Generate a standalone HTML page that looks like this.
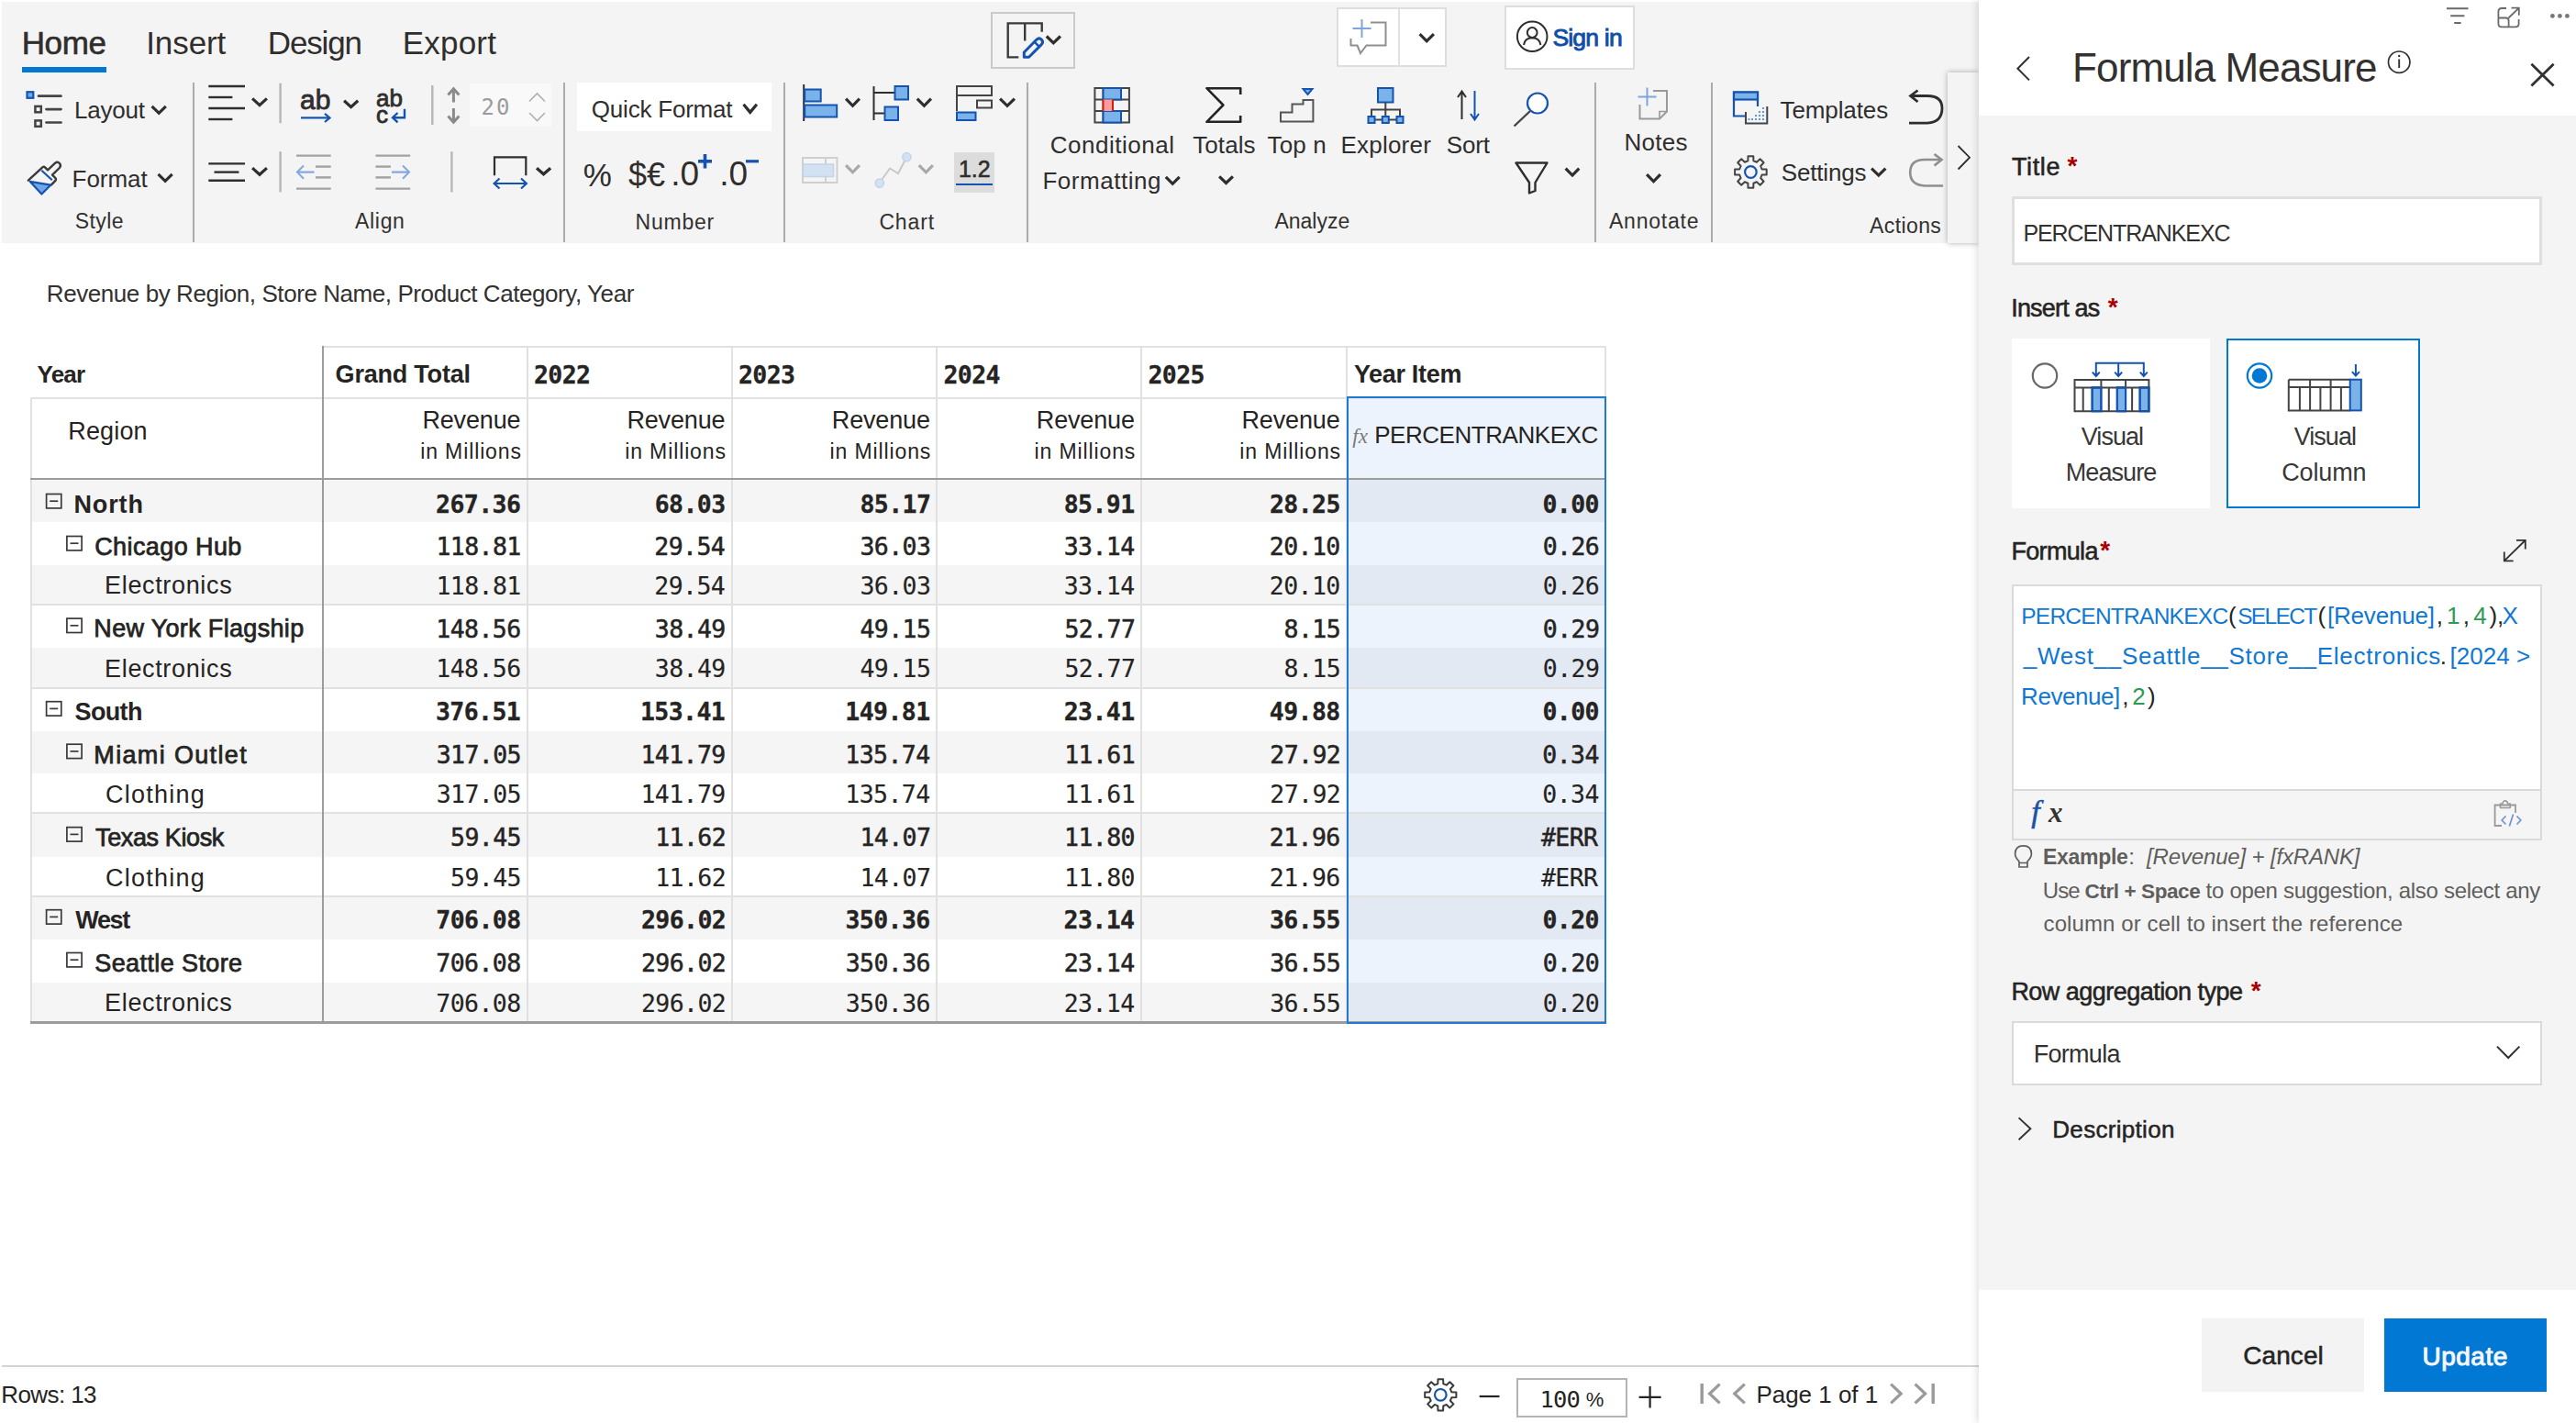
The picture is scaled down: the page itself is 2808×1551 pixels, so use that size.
<!DOCTYPE html>
<html lang="en"><head><meta charset="utf-8"><title>Formula Measure</title>
<style>
html,body{margin:0;padding:0;background:#fff;}
body{width:2808px;height:1551px;position:relative;overflow:hidden;font-family:"Liberation Sans",sans-serif;color:#252423;}
.sec{position:absolute;left:0;top:0;}
.t{position:absolute;white-space:pre;display:block;}
.r{position:absolute;box-sizing:border-box;display:block;}
svg{overflow:visible;}
</style></head>
<body>
<!-- ribbon -->
<div class="sec" id="ribbon">
<div class="r" style="left:2px;top:2px;width:2155px;height:262.5px;background:#f4f4f4;"></div>
<span class="t" style="left:23.7px;top:26.5px;font-size:35px;line-height:40px;color:#2f2e2d;font-family:'Liberation Sans',sans-serif;letter-spacing:-0.37px;-webkit-text-stroke:0.6px #2f2e2d;">Home</span>
<span class="t" style="left:159.2px;top:26.5px;font-size:35px;line-height:40px;color:#2f2e2d;font-family:'Liberation Sans',sans-serif;letter-spacing:-0.08px;">Insert</span>
<span class="t" style="left:291.8px;top:26.5px;font-size:35px;line-height:40px;color:#2f2e2d;font-family:'Liberation Sans',sans-serif;letter-spacing:-1.16px;">Design</span>
<span class="t" style="left:438.7px;top:26.5px;font-size:35px;line-height:40px;color:#2f2e2d;font-family:'Liberation Sans',sans-serif;letter-spacing:0.21px;">Export</span>
<div class="r" style="left:24px;top:73px;width:92px;height:6.4px;background:#0078d4;"></div>
<div class="r" style="left:209.7px;top:90px;width:2px;height:173.5px;background:#ababab;"></div>
<div class="r" style="left:614px;top:90px;width:2px;height:173.5px;background:#ababab;"></div>
<div class="r" style="left:854.4px;top:90px;width:2px;height:173.5px;background:#ababab;"></div>
<div class="r" style="left:1119.4px;top:90px;width:2px;height:173.5px;background:#ababab;"></div>
<div class="r" style="left:1737.8px;top:90px;width:2px;height:173.5px;background:#ababab;"></div>
<div class="r" style="left:1865px;top:90px;width:2px;height:173.5px;background:#ababab;"></div>
<span class="t" style="left:81.7px;top:228.4px;font-size:23px;line-height:26px;color:#323130;font-family:'Liberation Sans',sans-serif;letter-spacing:0.46px;">Style</span>
<span class="t" style="left:387.0px;top:228.4px;font-size:23px;line-height:26px;color:#323130;font-family:'Liberation Sans',sans-serif;letter-spacing:0.69px;">Align</span>
<span class="t" style="left:692.6px;top:228.6px;font-size:23px;line-height:26px;color:#323130;font-family:'Liberation Sans',sans-serif;letter-spacing:0.77px;">Number</span>
<span class="t" style="left:958.4px;top:228.6px;font-size:23px;line-height:26px;color:#323130;font-family:'Liberation Sans',sans-serif;letter-spacing:0.87px;">Chart</span>
<span class="t" style="left:1389.4px;top:228.4px;font-size:23px;line-height:26px;color:#323130;font-family:'Liberation Sans',sans-serif;letter-spacing:0.02px;">Analyze</span>
<span class="t" style="left:1754.0px;top:228.4px;font-size:23px;line-height:26px;color:#323130;font-family:'Liberation Sans',sans-serif;letter-spacing:0.77px;">Annotate</span>
<span class="t" style="left:2038.0px;top:233.4px;font-size:23px;line-height:26px;color:#323130;font-family:'Liberation Sans',sans-serif;letter-spacing:0.40px;">Actions</span>
<span class="t" style="left:80.9px;top:105.1px;font-size:26px;line-height:30px;color:#2f2e2d;font-family:'Liberation Sans',sans-serif;letter-spacing:-0.18px;">Layout</span>
<span class="t" style="left:78.6px;top:180.2px;font-size:26px;line-height:30px;color:#2f2e2d;font-family:'Liberation Sans',sans-serif;letter-spacing:-0.04px;">Format</span>
<div class="r" style="left:629.3px;top:90.3px;width:211.7px;height:53px;background:#ffffff;"></div>
<span class="t" style="left:644.8px;top:103.6px;font-size:26px;line-height:30px;color:#2f2e2d;font-family:'Liberation Sans',sans-serif;letter-spacing:-0.21px;">Quick Format</span>
<span class="t" style="left:635.8px;top:170.5px;font-size:35px;line-height:40px;color:#2f2e2d;font-family:'Liberation Sans',sans-serif;">%</span>
<span class="t" style="left:685.1px;top:169.5px;font-size:36px;line-height:41px;color:#2f2e2d;font-family:'Liberation Sans',sans-serif;">$€</span>
<span class="t" style="left:731.2px;top:169.0px;font-size:37px;line-height:42px;color:#2f2e2d;font-family:'Liberation Sans',sans-serif;">.0</span>
<span class="t" style="left:784.2px;top:169.0px;font-size:37px;line-height:42px;color:#2f2e2d;font-family:'Liberation Sans',sans-serif;">.0</span>
<div class="r" style="left:1039.8px;top:165.6px;width:44.2px;height:44px;background:#dcdcdc;"></div>
<span class="t" style="left:1044.9px;top:170.2px;font-size:25px;line-height:28px;color:#2f2e2d;font-family:'Liberation Sans',sans-serif;-webkit-text-stroke:0.6px #2f2e2d;">1.2</span>
<div class="r" style="left:1042px;top:199.8px;width:40px;height:2.6px;background:#1553b0;"></div>
<div class="r" style="left:511.8px;top:90.7px;width:89px;height:47.2px;background:#f9f9f9;"></div>
<span class="t" style="left:524.5px;top:103.2px;font-size:24px;line-height:28px;color:#9c9c9c;font-family:'DejaVu Sans Mono','Liberation Mono',monospace;letter-spacing:2.07px;">20</span>
<span class="t" style="left:327.1px;top:92.4px;font-size:30px;line-height:33px;color:#2f2e2d;font-family:'Liberation Sans',sans-serif;-webkit-text-stroke:0.8px #2f2e2d;">ab</span>
<span class="t" style="left:410.0px;top:91.8px;font-size:26px;line-height:30px;color:#2f2e2d;font-family:'Liberation Sans',sans-serif;-webkit-text-stroke:0.8px #2f2e2d;">ab</span>
<span class="t" style="left:410.0px;top:110.0px;font-size:26px;line-height:30px;color:#2f2e2d;font-family:'Liberation Sans',sans-serif;-webkit-text-stroke:0.8px #2f2e2d;">c</span>
<span class="t" style="left:1144.7px;top:143.0px;font-size:26px;line-height:30px;color:#2f2e2d;font-family:'Liberation Sans',sans-serif;letter-spacing:0.52px;">Conditional</span>
<span class="t" style="left:1136.4px;top:182.0px;font-size:26px;line-height:30px;color:#2f2e2d;font-family:'Liberation Sans',sans-serif;letter-spacing:0.54px;">Formatting</span>
<span class="t" style="left:1300.2px;top:143.0px;font-size:26px;line-height:30px;color:#2f2e2d;font-family:'Liberation Sans',sans-serif;letter-spacing:0.10px;">Totals</span>
<span class="t" style="left:1381.5px;top:143.0px;font-size:26px;line-height:30px;color:#2f2e2d;font-family:'Liberation Sans',sans-serif;letter-spacing:0.13px;">Top n</span>
<span class="t" style="left:1461.4px;top:143.0px;font-size:26px;line-height:30px;color:#2f2e2d;font-family:'Liberation Sans',sans-serif;letter-spacing:0.23px;">Explorer</span>
<span class="t" style="left:1576.8px;top:143.0px;font-size:26px;line-height:30px;color:#2f2e2d;font-family:'Liberation Sans',sans-serif;letter-spacing:-0.15px;">Sort</span>
<span class="t" style="left:1770.5px;top:139.8px;font-size:26px;line-height:30px;color:#2f2e2d;font-family:'Liberation Sans',sans-serif;letter-spacing:0.27px;">Notes</span>
<span class="t" style="left:1940.5px;top:105.0px;font-size:26px;line-height:30px;color:#2f2e2d;font-family:'Liberation Sans',sans-serif;letter-spacing:-0.10px;">Templates</span>
<span class="t" style="left:1941.8px;top:173.3px;font-size:26px;line-height:30px;color:#2f2e2d;font-family:'Liberation Sans',sans-serif;letter-spacing:-0.17px;">Settings</span>
<div class="r" style="left:1080px;top:13.4px;width:92px;height:61.3px;border:2px solid #cacaca;"></div>
<div class="r" style="left:1456.8px;top:8.1px;width:120.4px;height:65.4px;background:#fff;border:2.4px solid #dedede;"></div>
<div class="r" style="left:1524.3px;top:9px;width:2px;height:63.5px;background:#e1e1e1;"></div>
<div class="r" style="left:1639.8px;top:5.8px;width:141.9px;height:70px;background:#fff;border:2.4px solid #dedede;"></div>
<span class="t" style="left:1692.4px;top:26.3px;font-size:26.5px;line-height:30px;color:#0f4fa8;font-family:'Liberation Sans',sans-serif;letter-spacing:-0.79px;-webkit-text-stroke:0.9px #0f4fa8;">Sign in</span>
<div class="r" style="left:2123px;top:79px;width:34px;height:185.5px;background:#f4f4f4;box-shadow:0 0 6px rgba(0,0,0,0.32);"></div>
<svg class="r" style="left:0px;top:0px;" width="2808" height="1551" viewBox="0 0 2808 1551" fill="none"><rect x="29.5" y="100.2" width="6.8" height="6.6" fill="#6fa8e6" stroke="#1553b0" stroke-width="2.2"/><path d="M42 104.7 L66.5 104.7" stroke="#444" stroke-width="2.7" stroke-linecap="round"/><rect x="38.4" y="115.9" width="6.4" height="6.4" stroke="#444" stroke-width="2.5"/><path d="M50.5 119.1 L66.5 119.1" stroke="#444" stroke-width="2.7" stroke-linecap="round"/><rect x="38.4" y="131.4" width="6.4" height="6.4" stroke="#444" stroke-width="2.5"/><path d="M50.5 133.5 L66.5 133.5" stroke="#444" stroke-width="2.7" stroke-linecap="round"/><path d="M165.6 115.9 L173.2 123.3 L180.8 115.9" stroke="#2f2e2d" stroke-width="3.2"/><path d="M30.8 196.6 L46.6 182.2 Q47.8 181.1 49 182.3 L52 185.3 L60.2 177.6 Q62.6 175.6 65 178 Q67 180.5 64.8 183 L57 190.6 L60.4 194 Q61.6 195.6 60.2 197.2 L56 201.4" stroke="#3a3a3a" stroke-width="2.4" stroke-linejoin="round" stroke-linecap="round"/><path d="M32.6 197.8 L55.2 201.7 L45.4 211.6 Z" fill="#6fa8e6" stroke="#1553b0" stroke-width="2.2" stroke-linejoin="round"/><path d="M45.3 185.7 L56.8 196.3" stroke="#1553b0" stroke-width="2.2" /><path d="M172.5 189.9 L180.1 197.3 L187.7 189.9" stroke="#2f2e2d" stroke-width="3.2"/><path d="M227.3 94 L267 94" stroke="#2f2e2d" stroke-width="2.4" /><path d="M227.3 106 L253.4 106" stroke="#2f2e2d" stroke-width="2.4" /><path d="M227.3 118 L267 118" stroke="#2f2e2d" stroke-width="2.4" /><path d="M227.3 130 L253.4 130" stroke="#2f2e2d" stroke-width="2.4" /><path d="M275.1 107.4 L283.0 114.6 L290.9 107.4" stroke="#2f2e2d" stroke-width="3.2"/><path d="M305.6 90.7 L305.6 134.2" stroke="#b6b6b6" stroke-width="2.4" /><path d="M328 128.4 L359 128.4" stroke="#1553b0" stroke-width="2.2" /><path d="M354 123.8 L359.5 128.4 L354 133" stroke="#1553b0" stroke-width="2.2"/><path d="M375.1 109.7 L382.6 116.6 L390.2 109.7" stroke="#2f2e2d" stroke-width="3.2"/><path d="M441 118.8 L441 128.2 L428.5 128.2" stroke="#1553b0" stroke-width="2.4"/><path d="M433.5 123 L428 128.2 L433.5 133.4" stroke="#1553b0" stroke-width="2.4"/><path d="M471.3 93 L471.3 136" stroke="#b6b6b6" stroke-width="2.4" /><path d="M494.4 97.5 L494.4 111.5" stroke="#8a8a8a" stroke-width="3" /><path d="M494.4 118 L494.4 132.5" stroke="#8a8a8a" stroke-width="3" /><path d="M488.4 103.4 L494.4 96.8 L500.4 103.4" stroke="#8a8a8a" stroke-width="3"/><path d="M488.4 126.6 L494.4 133.2 L500.4 126.6" stroke="#8a8a8a" stroke-width="3"/><path d="M577 110.5 L585.5 102 L594 110.5" stroke="#b0b0b0" stroke-width="1.6"/><path d="M577 123 L585.5 131.5 L594 123" stroke="#b0b0b0" stroke-width="1.6"/><path d="M227.3 178.4 L267 178.4" stroke="#2f2e2d" stroke-width="2.4" /><path d="M233.5 187.6 L260.4 187.6" stroke="#2f2e2d" stroke-width="2.4" /><path d="M227.3 196.8 L267 196.8" stroke="#2f2e2d" stroke-width="2.4" /><path d="M275.1 183.1 L283.0 190.3 L290.9 183.1" stroke="#2f2e2d" stroke-width="3.2"/><path d="M305.6 165.2 L305.6 209.4" stroke="#b6b6b6" stroke-width="2.4" /><path d="M323 169.6 L360.7 169.6" stroke="#a2a2a2" stroke-width="2.4" /><path d="M323 205.6 L360.7 205.6" stroke="#a2a2a2" stroke-width="2.4" /><path d="M344 181.6 L360.7 181.6" stroke="#a2a2a2" stroke-width="2.4" /><path d="M344 193.4 L360.7 193.4" stroke="#a2a2a2" stroke-width="2.4" /><path d="M324.5 187.6 L342.5 187.6" stroke="#82a6de" stroke-width="2.2" /><path d="M331 180.5 L324 187.6 L331 194.7" stroke="#82a6de" stroke-width="2"/><path d="M409.4 169.6 L447.2 169.6" stroke="#a2a2a2" stroke-width="2.4" /><path d="M409.4 205.6 L447.2 205.6" stroke="#a2a2a2" stroke-width="2.4" /><path d="M409.4 181.6 L426 181.6" stroke="#a2a2a2" stroke-width="2.4" /><path d="M409.4 193.4 L426 193.4" stroke="#a2a2a2" stroke-width="2.4" /><path d="M427 187.6 L445.5 187.6" stroke="#82a6de" stroke-width="2.2" /><path d="M439 180.5 L446 187.6 L439 194.7" stroke="#82a6de" stroke-width="2"/><path d="M492.4 165.2 L492.4 209.4" stroke="#b6b6b6" stroke-width="2.4" /><path d="M539 191.3 L539 171.3 L573.3 171.3 L573.3 191.3" stroke="#2f2e2d" stroke-width="2.2"/><path d="M539 200 L573.5 200" stroke="#1553b0" stroke-width="2.2" /><path d="M544.5 194.5 L538.6 200 L544.5 205.5" stroke="#1553b0" stroke-width="2.2"/><path d="M568 194.5 L573.9 200 L568 205.5" stroke="#1553b0" stroke-width="2.2"/><path d="M585.0 183.2 L592.5 189.8 L600.1 183.2" stroke="#2f2e2d" stroke-width="3.2"/><path d="M810.5 113.8 L817.7 122.4 L824.9 113.8" stroke="#2f2e2d" stroke-width="3.2"/><path d="M761 175.8 L776 175.8" stroke="#1553b0" stroke-width="3.6" /><path d="M768.5 168 L768.5 183.5" stroke="#1553b0" stroke-width="3.6" /><path d="M813 175.8 L827 175.8" stroke="#1553b0" stroke-width="3.2" /></svg>
<svg class="r" style="left:0px;top:0px;" width="2808" height="1551" viewBox="0 0 2808 1551" fill="none"><path d="M876.2 92 L876.2 132" stroke="#2f2e2d" stroke-width="2" /><rect x="877.2" y="97.5" width="17.5" height="13" fill="#7ab3ea" stroke="#1553b0" stroke-width="2"/><rect x="877.2" y="114.5" width="35" height="13" fill="#7ab3ea" stroke="#1553b0" stroke-width="2"/><path d="M922.1 107.6 L929.5 115.3 L936.9 107.6" stroke="#2f2e2d" stroke-width="3.2"/><path d="M952.5 94 L952.5 131 M952.5 101 L975 101 M952.5 123.5 L964 123.5" stroke="#2f2e2d" stroke-width="2"/><rect x="975.5" y="94" width="14.5" height="14.5" fill="#7ab3ea" stroke="#1553b0" stroke-width="2"/><rect x="964.5" y="116.5" width="14.5" height="14.5" fill="#7ab3ea" stroke="#1553b0" stroke-width="2"/><path d="M999.8 107.6 L1007.4 115.3 L1014.9 107.6" stroke="#2f2e2d" stroke-width="3.2"/><path d="M1043 121 L1043 94 L1081 94 L1081 104 L1043 104" stroke="#444" stroke-width="2"/><rect x="1065" y="109.5" width="16" height="8" stroke="#444" stroke-width="2"/><rect x="1043" y="122.5" width="20.5" height="8.5" fill="#7ab3ea" stroke="#1553b0" stroke-width="2"/><path d="M1090.1 107.6 L1098.0 115.3 L1105.9 107.6" stroke="#2f2e2d" stroke-width="3.2"/><rect x="875" y="172" width="37.5" height="27" stroke="#cfcfcf" stroke-width="2"/><path d="M900 172 L900 179 M900 192.5 L900 199" stroke="#cfcfcf" stroke-width="2"/><rect x="875.5" y="179" width="33" height="13.5" fill="#d3e2f3" stroke="#c3d3e8" stroke-width="1.5"/><path d="M922.1 180.1 L929.5 187.8 L936.9 180.1" stroke="#a9a9a9" stroke-width="3.2"/><path d="M959 199 L970 183.5 L979 189 L988 172" stroke="#c8c8c8" stroke-width="2"/><circle cx="958.8" cy="199.6" r="4.6" fill="#d3e2f3" stroke="#c3d3e8" stroke-width="1.5"/><circle cx="988.4" cy="171.2" r="4.6" fill="#d3e2f3" stroke="#c3d3e8" stroke-width="1.5"/><path d="M1001.8 180.1 L1009.4 187.8 L1016.9 180.1" stroke="#a9a9a9" stroke-width="3.2"/><path d="M1110.3 62.4 L1098.7 62.4 L1098.7 25.4 L1135.7 25.4 L1135.7 34.8 M1117.2 25.4 L1117.2 44.4" stroke="#3a3a3a" stroke-width="2.4"/><path d="M1116.3 62.2 L1116.3 57 L1129.8 43.3 Q1132.8 40.6 1135.4 43.2 Q1137.8 45.8 1135.2 48.6 L1121.6 62.2 Z" stroke="#1553b0" stroke-width="3" stroke-linejoin="round"/><path d="M1127.6 45.6 L1132.8 50.8" stroke="#1553b0" stroke-width="2.6"/><path d="M1140.8 39.5 L1148.3 46.8 L1155.9 39.5" stroke="#2f2e2d" stroke-width="3.2"/><path d="M1494 24.5 L1510.5 24.5 L1510.5 49.5 L1489.5 49.5 L1483 58 L1479.5 49.5 L1472.5 49.5 L1472.5 42" stroke="#8f8f8f" stroke-width="2"/><path d="M1474.5 31 L1494.5 31 M1484.5 21 L1484.5 41" stroke="#7fa6dc" stroke-width="2"/><path d="M1547.6 37.1 L1555.2 44.8 L1562.9 37.1" stroke="#2f2e2d" stroke-width="3.2"/><circle cx="1670.2" cy="39.8" r="16.3" stroke="#2f2e2d" stroke-width="2"/><circle cx="1670.2" cy="35.5" r="5.4" stroke="#2f2e2d" stroke-width="2"/><path d="M1661 49 Q1662 41.5 1670.2 41.3 Q1678.4 41.5 1679.4 49" stroke="#2f2e2d" stroke-width="2"/><rect x="1193.4" y="96" width="37.5" height="37.5" stroke="#444" stroke-width="2"/><path d="M1193.4 108.5 L1231 108.5 M1193.4 121 L1231 121 M1202.5 96 L1202.5 133.5 M1222 96 L1222 108.5 M1222 121 L1222 133.5" stroke="#444" stroke-width="1.8"/><rect x="1202.5" y="96" width="19.5" height="12.5" fill="#7ab3ea" stroke="#1553b0" stroke-width="2"/><rect x="1202.5" y="121" width="19.5" height="12.5" fill="#7ab3ea" stroke="#1553b0" stroke-width="2"/><rect x="1202.5" y="108.5" width="10.5" height="12.5" fill="#ff9aa0"/><path d="M1202.5 108.5 L1202.5 121 M1213 108.5 L1213 121" stroke="#d81e05" stroke-width="2"/><path d="M1270.8 192.9 L1278.2 200.3 L1285.7 192.9" stroke="#2f2e2d" stroke-width="3.2"/><path d="M1352.2 103 L1352.2 96.2 L1315.4 96.2 L1333.4 114.5 L1315.4 132.8 L1352.2 132.8 L1352.2 126" stroke="#252423" stroke-width="2.6" stroke-linejoin="round"/><path d="M1329.1 192.4 L1336.5 199.5 L1343.9 192.4" stroke="#2f2e2d" stroke-width="3.2"/><path d="M1396 132.4 L1396 122.5 L1408.5 122.5 L1408.5 113.5 L1420.5 113.5 L1420.5 109 L1431.4 109 L1431.4 132.4 Z" stroke="#555" stroke-width="2"/><path d="M1420.5 97 L1430.5 97 L1425.5 103 Z" fill="#7ab3ea" stroke="#1553b0" stroke-width="2"/><rect x="1502" y="96" width="16.5" height="15.5" fill="#7ab3ea" stroke="#1553b0" stroke-width="2"/><path d="M1510.3 111.5 L1510.3 127 M1495 127 L1495 119.5 L1526 119.5 L1526 127 M1495 130.5 L1526 130.5" stroke="#444" stroke-width="2"/><rect x="1491.5" y="127" width="7" height="7" fill="#7ab3ea" stroke="#1553b0" stroke-width="2"/><rect x="1506.8" y="127" width="7" height="7" fill="#7ab3ea" stroke="#1553b0" stroke-width="2"/><rect x="1522.5" y="127" width="7" height="7" fill="#7ab3ea" stroke="#1553b0" stroke-width="2"/><path d="M1593.5 130 L1593.5 100 M1589 106 L1593.5 99.6 L1598 106" stroke="#2f2e2d" stroke-width="2"/><path d="M1607.5 99 L1607.5 130 M1603 124 L1607.5 130.4 L1612 124" stroke="#1553b0" stroke-width="2"/><circle cx="1676" cy="112.5" r="11" fill="#fff" stroke="#1553b0" stroke-width="2.2"/><path d="M1668 121 L1650.5 137.5" stroke="#444" stroke-width="2.4" /><path d="M1652.5 177.5 L1686.5 177.5 L1673.5 199 L1673.5 208 L1667 210.5 L1667 199 Z" stroke="#2f2e2d" stroke-width="2.4" stroke-linejoin="round"/><path d="M1706.6 183.7 L1714.0 191.1 L1721.3 183.7" stroke="#2f2e2d" stroke-width="3.2"/><path d="M1802 99 L1817 99 L1817 121.5 L1809 129.5 L1787.5 129.5 L1787.5 114" stroke="#9a9a9a" stroke-width="2"/><path d="M1817 121.5 L1809 121.5 L1809 129.5" stroke="#9a9a9a" stroke-width="1.6"/><path d="M1785.5 105.5 L1805.5 105.5 M1795.5 95.5 L1795.5 115.5" stroke="#7fa6dc" stroke-width="2"/><path d="M1795.1 190.1 L1802.5 197.8 L1809.9 190.1" stroke="#2f2e2d" stroke-width="3.2"/><path d="M1903 126.5 L1890 126.5 L1890 100.5 L1916 100.5 L1916 116" stroke="#1553b0" stroke-width="2.2"/><rect x="1890" y="100.5" width="26" height="8" fill="#7ab3ea" stroke="#1553b0" stroke-width="2.2"/><path d="M1903 122 L1903 134.4 L1926.3 134.4 L1926.3 116" stroke="#444" stroke-width="2"/><rect x="1921" y="117" width="2" height="2" fill="#5b9be0"/><rect x="1921" y="121" width="2" height="2" fill="#5b9be0"/><rect x="1917" y="121" width="2" height="2" fill="#5b9be0"/><rect x="1921" y="125" width="2" height="2" fill="#5b9be0"/><rect x="1917" y="125" width="2" height="2" fill="#5b9be0"/><rect x="1913" y="125" width="2" height="2" fill="#5b9be0"/><rect x="1921" y="129" width="2" height="2" fill="#5b9be0"/><rect x="1917" y="129" width="2" height="2" fill="#5b9be0"/><rect x="1913" y="129" width="2" height="2" fill="#5b9be0"/><rect x="1909" y="129" width="2" height="2" fill="#5b9be0"/><rect x="1905.5" y="129" width="2" height="2" fill="#5b9be0"/><path d="M2081 134.2 L2101 134.2 Q2117 133 2117 118 Q2117 104.5 2101 104.5 L2083 104.5" stroke="#2f2e2d" stroke-width="2.8"/><path d="M2090.5 98.5 L2082.5 104.5 L2090.5 111" stroke="#2f2e2d" stroke-width="2.8"/><path d="M2118 202.5 L2098 202.5 Q2082.2 201.5 2082.2 188 Q2082.2 174 2098 174 L2116 174" stroke="#8e8e8e" stroke-width="2.6"/><path d="M2108.5 168 L2116.5 174 L2108.5 180.5" stroke="#8e8e8e" stroke-width="2.6"/><path d="M1905.4 175.3 L1905.5 170.2 L1911.3 170.2 L1911.4 175.3 L1914.9 176.7 L1918.6 173.3 L1922.6 177.3 L1919.2 181.0 L1920.6 184.5 L1925.7 184.6 L1925.7 190.4 L1920.6 190.5 L1919.2 194.0 L1922.6 197.7 L1918.6 201.7 L1914.9 198.3 L1911.4 199.7 L1911.3 204.8 L1905.5 204.8 L1905.4 199.7 L1901.9 198.3 L1898.2 201.7 L1894.2 197.7 L1897.6 194.0 L1896.2 190.5 L1891.1 190.4 L1891.1 184.6 L1896.2 184.5 L1897.6 181.0 L1894.2 177.3 L1898.2 173.3 L1901.9 176.7 Z" stroke="#444" stroke-width="2" stroke-linejoin="round"/><circle cx="1908.4" cy="187.5" r="6.3" stroke="#1553b0" stroke-width="2.2"/><path d="M2040.1 183.7 L2047.8 191.1 L2055.4 183.7" stroke="#2f2e2d" stroke-width="3.2"/><path d="M2134.5 159 L2147 171.7 L2134.5 184.5" stroke="#2f2e2d" stroke-width="1.8"/></svg>
</div>

<!-- table -->
<div class="sec" id="table">
<span class="t" style="left:50.8px;top:305.0px;font-size:26px;line-height:30px;color:#323130;font-family:'Liberation Sans',sans-serif;letter-spacing:-0.43px;">Revenue by Region, Store Name, Product Category, Year</span>
<div class="r" style="left:34px;top:522.6px;width:1433.9px;height:46.2px;background:#f5f5f5;"></div>
<div class="r" style="left:34px;top:616.1px;width:1433.9px;height:43.9px;background:#f5f5f5;"></div>
<div class="r" style="left:34px;top:706.3px;width:1433.9px;height:44.5px;background:#f5f5f5;"></div>
<div class="r" style="left:34px;top:797px;width:1433.9px;height:46px;background:#f5f5f5;"></div>
<div class="r" style="left:34px;top:886.6px;width:1433.9px;height:47.2px;background:#f5f5f5;"></div>
<div class="r" style="left:34px;top:977.3px;width:1433.9px;height:46.7px;background:#f5f5f5;"></div>
<div class="r" style="left:34px;top:1071.2px;width:1433.9px;height:42.8px;background:#f5f5f5;"></div>
<div class="r" style="left:1467.9px;top:434px;width:282.5px;height:680px;background:#edf3fc;"></div>
<div class="r" style="left:1467.9px;top:522.6px;width:282.5px;height:46.2px;background:#e3e9f3;"></div>
<div class="r" style="left:1467.9px;top:616.1px;width:282.5px;height:43.9px;background:#e3e9f3;"></div>
<div class="r" style="left:1467.9px;top:706.3px;width:282.5px;height:44.5px;background:#e3e9f3;"></div>
<div class="r" style="left:1467.9px;top:797px;width:282.5px;height:46px;background:#e3e9f3;"></div>
<div class="r" style="left:1467.9px;top:886.6px;width:282.5px;height:47.2px;background:#e3e9f3;"></div>
<div class="r" style="left:1467.9px;top:977.3px;width:282.5px;height:46.7px;background:#e3e9f3;"></div>
<div class="r" style="left:1467.9px;top:1071.2px;width:282.5px;height:42.8px;background:#e3e9f3;"></div>
<div class="r" style="left:33px;top:658.4px;width:1718.4px;height:2px;background:#e1e1e1;"></div>
<div class="r" style="left:33px;top:749.1999999999999px;width:1718.4px;height:2px;background:#e1e1e1;"></div>
<div class="r" style="left:33px;top:885.0px;width:1718.4px;height:2px;background:#e1e1e1;"></div>
<div class="r" style="left:33px;top:975.6999999999999px;width:1718.4px;height:2px;background:#e1e1e1;"></div>
<div class="r" style="left:352px;top:377.4px;width:1399.4px;height:2px;background:#e1e1e1;"></div>
<div class="r" style="left:33px;top:433px;width:1718.4px;height:2px;background:#e1e1e1;"></div>
<div class="r" style="left:33px;top:433px;width:2px;height:681px;background:#e1e1e1;"></div>
<div class="r" style="left:1749.4px;top:377.4px;width:2px;height:57px;background:#e1e1e1;"></div>
<div class="r" style="left:573.8px;top:377.4px;width:2px;height:736.6px;background:#e1e1e1;"></div>
<div class="r" style="left:796.8px;top:377.4px;width:2px;height:736.6px;background:#e1e1e1;"></div>
<div class="r" style="left:1020.2px;top:377.4px;width:2px;height:736.6px;background:#e1e1e1;"></div>
<div class="r" style="left:1243.2px;top:377.4px;width:2px;height:736.6px;background:#e1e1e1;"></div>
<div class="r" style="left:1466.9px;top:377.4px;width:2px;height:736.6px;background:#e1e1e1;"></div>
<div class="r" style="left:350.8px;top:377.4px;width:2.4px;height:737.6px;background:#9c9c9c;"></div>
<div class="r" style="left:33px;top:520.6px;width:1718.4px;height:2.2px;background:#9c9c9c;"></div>
<div class="r" style="left:33px;top:1113.2px;width:1718.4px;height:2.4px;background:#9c9c9c;"></div>
<div class="r" style="left:1467.5px;top:432.2px;width:283.3px;height:683.8px;border:2.6px solid #1f7ad6;"></div>
<span class="t" style="left:40.6px;top:393.4px;font-size:26px;line-height:30px;color:#252423;font-family:'Liberation Sans',sans-serif;font-weight:700;letter-spacing:-0.83px;">Year</span>
<span class="t" style="left:365.6px;top:392.6px;font-size:27px;line-height:31px;color:#252423;font-family:'Liberation Sans',sans-serif;font-weight:700;letter-spacing:-0.21px;">Grand Total</span>
<span class="t" style="left:582.0px;top:392.6px;font-size:26.5px;line-height:31px;color:#252423;font-family:'DejaVu Sans Mono','Liberation Mono',monospace;font-weight:700;letter-spacing:-0.58px;-webkit-text-stroke:0.3px #252423;">2022</span>
<span class="t" style="left:805.0px;top:392.6px;font-size:26.5px;line-height:31px;color:#252423;font-family:'DejaVu Sans Mono','Liberation Mono',monospace;font-weight:700;letter-spacing:-0.58px;-webkit-text-stroke:0.3px #252423;">2023</span>
<span class="t" style="left:1028.4px;top:392.6px;font-size:26.5px;line-height:31px;color:#252423;font-family:'DejaVu Sans Mono','Liberation Mono',monospace;font-weight:700;letter-spacing:-0.58px;-webkit-text-stroke:0.3px #252423;">2024</span>
<span class="t" style="left:1251.4px;top:392.6px;font-size:26.5px;line-height:31px;color:#252423;font-family:'DejaVu Sans Mono','Liberation Mono',monospace;font-weight:700;letter-spacing:-0.58px;-webkit-text-stroke:0.3px #252423;">2025</span>
<span class="t" style="left:1475.9px;top:392.8px;font-size:27px;line-height:31px;color:#252423;font-family:'Liberation Sans',sans-serif;font-weight:700;letter-spacing:-0.32px;">Year Item</span>
<span class="t" style="left:74.3px;top:454.6px;font-size:27px;line-height:31px;color:#252423;font-family:'Liberation Sans',sans-serif;letter-spacing:0.15px;">Region</span>
<span class="t" style="left:460.4px;top:443.0px;font-size:27px;line-height:31px;color:#252423;font-family:'Liberation Sans',sans-serif;letter-spacing:-0.15px;">Revenue</span>
<span class="t" style="left:458.2px;top:479.0px;font-size:23px;line-height:26px;color:#252423;font-family:'Liberation Sans',sans-serif;letter-spacing:0.88px;">in Millions</span>
<span class="t" style="left:683.4px;top:443.0px;font-size:27px;line-height:31px;color:#252423;font-family:'Liberation Sans',sans-serif;letter-spacing:-0.15px;">Revenue</span>
<span class="t" style="left:681.2px;top:479.0px;font-size:23px;line-height:26px;color:#252423;font-family:'Liberation Sans',sans-serif;letter-spacing:0.88px;">in Millions</span>
<span class="t" style="left:906.8px;top:443.0px;font-size:27px;line-height:31px;color:#252423;font-family:'Liberation Sans',sans-serif;letter-spacing:-0.15px;">Revenue</span>
<span class="t" style="left:904.6px;top:479.0px;font-size:23px;line-height:26px;color:#252423;font-family:'Liberation Sans',sans-serif;letter-spacing:0.88px;">in Millions</span>
<span class="t" style="left:1129.8px;top:443.0px;font-size:27px;line-height:31px;color:#252423;font-family:'Liberation Sans',sans-serif;letter-spacing:-0.15px;">Revenue</span>
<span class="t" style="left:1127.6px;top:479.0px;font-size:23px;line-height:26px;color:#252423;font-family:'Liberation Sans',sans-serif;letter-spacing:0.88px;">in Millions</span>
<span class="t" style="left:1353.5px;top:443.0px;font-size:27px;line-height:31px;color:#252423;font-family:'Liberation Sans',sans-serif;letter-spacing:-0.15px;">Revenue</span>
<span class="t" style="left:1351.3px;top:479.0px;font-size:23px;line-height:26px;color:#252423;font-family:'Liberation Sans',sans-serif;letter-spacing:0.88px;">in Millions</span>
<span class="t" style="left:1474.3px;top:463.0px;font-size:23px;line-height:26px;color:#7a7a7a;font-family:'Liberation Serif',serif;font-style:italic;">fx</span>
<span class="t" style="left:1498.2px;top:459.0px;font-size:26px;line-height:30px;color:#252423;font-family:'Liberation Sans',sans-serif;letter-spacing:-0.45px;">PERCENTRANKEXC</span>
<span class="t" style="left:80.5px;top:534.8px;font-size:27px;line-height:31px;color:#252423;font-family:'Liberation Sans',sans-serif;font-weight:700;letter-spacing:0.85px;">North</span>
<span class="t" style="left:475.1px;top:534.1px;font-size:26.5px;line-height:31px;color:#252423;font-family:'DejaVu Sans Mono','Liberation Mono',monospace;font-weight:700;letter-spacing:-0.58px;-webkit-text-stroke:0.3px #252423;">267.36</span>
<span class="t" style="left:713.7px;top:534.1px;font-size:26.5px;line-height:31px;color:#252423;font-family:'DejaVu Sans Mono','Liberation Mono',monospace;font-weight:700;letter-spacing:-0.58px;-webkit-text-stroke:0.3px #252423;">68.03</span>
<span class="t" style="left:937.4px;top:534.1px;font-size:26.5px;line-height:31px;color:#252423;font-family:'DejaVu Sans Mono','Liberation Mono',monospace;font-weight:700;letter-spacing:-0.58px;-webkit-text-stroke:0.3px #252423;">85.17</span>
<span class="t" style="left:1159.7px;top:534.1px;font-size:26.5px;line-height:31px;color:#252423;font-family:'DejaVu Sans Mono','Liberation Mono',monospace;font-weight:700;letter-spacing:-0.58px;-webkit-text-stroke:0.3px #252423;">85.91</span>
<span class="t" style="left:1383.9px;top:534.1px;font-size:26.5px;line-height:31px;color:#252423;font-family:'DejaVu Sans Mono','Liberation Mono',monospace;font-weight:700;letter-spacing:-0.58px;-webkit-text-stroke:0.3px #252423;">28.25</span>
<span class="t" style="left:1681.5px;top:534.1px;font-size:26.5px;line-height:31px;color:#252423;font-family:'DejaVu Sans Mono','Liberation Mono',monospace;font-weight:700;letter-spacing:-0.58px;-webkit-text-stroke:0.3px #252423;">0.00</span>
<span class="t" style="left:103.2px;top:580.8px;font-size:27px;line-height:31px;color:#252423;font-family:'Liberation Sans',sans-serif;letter-spacing:0.41px;-webkit-text-stroke:0.75px #252423;">Chicago Hub</span>
<span class="t" style="left:475.5px;top:580.1px;font-size:26.5px;line-height:31px;color:#252423;font-family:'DejaVu Sans Mono','Liberation Mono',monospace;letter-spacing:-0.58px;-webkit-text-stroke:0.5px #252423;">118.81</span>
<span class="t" style="left:713.3px;top:580.1px;font-size:26.5px;line-height:31px;color:#252423;font-family:'DejaVu Sans Mono','Liberation Mono',monospace;letter-spacing:-0.58px;-webkit-text-stroke:0.5px #252423;">29.54</span>
<span class="t" style="left:937.4px;top:580.1px;font-size:26.5px;line-height:31px;color:#252423;font-family:'DejaVu Sans Mono','Liberation Mono',monospace;letter-spacing:-0.58px;-webkit-text-stroke:0.5px #252423;">36.03</span>
<span class="t" style="left:1159.7px;top:580.1px;font-size:26.5px;line-height:31px;color:#252423;font-family:'DejaVu Sans Mono','Liberation Mono',monospace;letter-spacing:-0.58px;-webkit-text-stroke:0.5px #252423;">33.14</span>
<span class="t" style="left:1383.8px;top:580.1px;font-size:26.5px;line-height:31px;color:#252423;font-family:'DejaVu Sans Mono','Liberation Mono',monospace;letter-spacing:-0.58px;-webkit-text-stroke:0.5px #252423;">20.10</span>
<span class="t" style="left:1681.7px;top:580.1px;font-size:26.5px;line-height:31px;color:#252423;font-family:'DejaVu Sans Mono','Liberation Mono',monospace;letter-spacing:-0.58px;-webkit-text-stroke:0.5px #252423;">0.26</span>
<span class="t" style="left:114.1px;top:623.2px;font-size:27px;line-height:31px;color:#252423;font-family:'Liberation Sans',sans-serif;letter-spacing:0.65px;">Electronics</span>
<span class="t" style="left:475.5px;top:622.5px;font-size:26.5px;line-height:31px;color:#252423;font-family:'DejaVu Sans Mono','Liberation Mono',monospace;letter-spacing:-0.58px;-webkit-text-stroke:0.15px #252423;">118.81</span>
<span class="t" style="left:713.3px;top:622.5px;font-size:26.5px;line-height:31px;color:#252423;font-family:'DejaVu Sans Mono','Liberation Mono',monospace;letter-spacing:-0.58px;-webkit-text-stroke:0.15px #252423;">29.54</span>
<span class="t" style="left:937.4px;top:622.5px;font-size:26.5px;line-height:31px;color:#252423;font-family:'DejaVu Sans Mono','Liberation Mono',monospace;letter-spacing:-0.58px;-webkit-text-stroke:0.15px #252423;">36.03</span>
<span class="t" style="left:1159.7px;top:622.5px;font-size:26.5px;line-height:31px;color:#252423;font-family:'DejaVu Sans Mono','Liberation Mono',monospace;letter-spacing:-0.58px;-webkit-text-stroke:0.15px #252423;">33.14</span>
<span class="t" style="left:1383.8px;top:622.5px;font-size:26.5px;line-height:31px;color:#252423;font-family:'DejaVu Sans Mono','Liberation Mono',monospace;letter-spacing:-0.58px;-webkit-text-stroke:0.15px #252423;">20.10</span>
<span class="t" style="left:1681.7px;top:622.5px;font-size:26.5px;line-height:31px;color:#252423;font-family:'DejaVu Sans Mono','Liberation Mono',monospace;letter-spacing:-0.58px;-webkit-text-stroke:0.15px #252423;">0.26</span>
<span class="t" style="left:102.3px;top:670.4px;font-size:27px;line-height:31px;color:#252423;font-family:'Liberation Sans',sans-serif;letter-spacing:0.33px;-webkit-text-stroke:0.75px #252423;">New York Flagship</span>
<span class="t" style="left:475.3px;top:669.7px;font-size:26.5px;line-height:31px;color:#252423;font-family:'DejaVu Sans Mono','Liberation Mono',monospace;letter-spacing:-0.58px;-webkit-text-stroke:0.5px #252423;">148.56</span>
<span class="t" style="left:713.8px;top:669.7px;font-size:26.5px;line-height:31px;color:#252423;font-family:'DejaVu Sans Mono','Liberation Mono',monospace;letter-spacing:-0.58px;-webkit-text-stroke:0.5px #252423;">38.49</span>
<span class="t" style="left:937.5px;top:669.7px;font-size:26.5px;line-height:31px;color:#252423;font-family:'DejaVu Sans Mono','Liberation Mono',monospace;letter-spacing:-0.58px;-webkit-text-stroke:0.5px #252423;">49.15</span>
<span class="t" style="left:1160.4px;top:669.7px;font-size:26.5px;line-height:31px;color:#252423;font-family:'DejaVu Sans Mono','Liberation Mono',monospace;letter-spacing:-0.58px;-webkit-text-stroke:0.5px #252423;">52.77</span>
<span class="t" style="left:1399.6px;top:669.7px;font-size:26.5px;line-height:31px;color:#252423;font-family:'DejaVu Sans Mono','Liberation Mono',monospace;letter-spacing:-0.58px;-webkit-text-stroke:0.5px #252423;">8.15</span>
<span class="t" style="left:1681.8px;top:669.7px;font-size:26.5px;line-height:31px;color:#252423;font-family:'DejaVu Sans Mono','Liberation Mono',monospace;letter-spacing:-0.58px;-webkit-text-stroke:0.5px #252423;">0.29</span>
<span class="t" style="left:114.1px;top:713.9px;font-size:27px;line-height:31px;color:#252423;font-family:'Liberation Sans',sans-serif;letter-spacing:0.65px;">Electronics</span>
<span class="t" style="left:475.3px;top:713.2px;font-size:26.5px;line-height:31px;color:#252423;font-family:'DejaVu Sans Mono','Liberation Mono',monospace;letter-spacing:-0.58px;-webkit-text-stroke:0.15px #252423;">148.56</span>
<span class="t" style="left:713.8px;top:713.2px;font-size:26.5px;line-height:31px;color:#252423;font-family:'DejaVu Sans Mono','Liberation Mono',monospace;letter-spacing:-0.58px;-webkit-text-stroke:0.15px #252423;">38.49</span>
<span class="t" style="left:937.5px;top:713.2px;font-size:26.5px;line-height:31px;color:#252423;font-family:'DejaVu Sans Mono','Liberation Mono',monospace;letter-spacing:-0.58px;-webkit-text-stroke:0.15px #252423;">49.15</span>
<span class="t" style="left:1160.4px;top:713.2px;font-size:26.5px;line-height:31px;color:#252423;font-family:'DejaVu Sans Mono','Liberation Mono',monospace;letter-spacing:-0.58px;-webkit-text-stroke:0.15px #252423;">52.77</span>
<span class="t" style="left:1399.6px;top:713.2px;font-size:26.5px;line-height:31px;color:#252423;font-family:'DejaVu Sans Mono','Liberation Mono',monospace;letter-spacing:-0.58px;-webkit-text-stroke:0.15px #252423;">8.15</span>
<span class="t" style="left:1681.8px;top:713.2px;font-size:26.5px;line-height:31px;color:#252423;font-family:'DejaVu Sans Mono','Liberation Mono',monospace;letter-spacing:-0.58px;-webkit-text-stroke:0.15px #252423;">0.29</span>
<span class="t" style="left:81.6px;top:761.0px;font-size:27px;line-height:31px;color:#252423;font-family:'Liberation Sans',sans-serif;font-weight:700;letter-spacing:-0.67px;">South</span>
<span class="t" style="left:474.9px;top:760.3px;font-size:26.5px;line-height:31px;color:#252423;font-family:'DejaVu Sans Mono','Liberation Mono',monospace;font-weight:700;letter-spacing:-0.58px;-webkit-text-stroke:0.3px #252423;">376.51</span>
<span class="t" style="left:697.9px;top:760.3px;font-size:26.5px;line-height:31px;color:#252423;font-family:'DejaVu Sans Mono','Liberation Mono',monospace;font-weight:700;letter-spacing:-0.58px;-webkit-text-stroke:0.3px #252423;">153.41</span>
<span class="t" style="left:921.3px;top:760.3px;font-size:26.5px;line-height:31px;color:#252423;font-family:'DejaVu Sans Mono','Liberation Mono',monospace;font-weight:700;letter-spacing:-0.58px;-webkit-text-stroke:0.3px #252423;">149.81</span>
<span class="t" style="left:1159.7px;top:760.3px;font-size:26.5px;line-height:31px;color:#252423;font-family:'DejaVu Sans Mono','Liberation Mono',monospace;font-weight:700;letter-spacing:-0.58px;-webkit-text-stroke:0.3px #252423;">23.41</span>
<span class="t" style="left:1383.8px;top:760.3px;font-size:26.5px;line-height:31px;color:#252423;font-family:'DejaVu Sans Mono','Liberation Mono',monospace;font-weight:700;letter-spacing:-0.58px;-webkit-text-stroke:0.3px #252423;">49.88</span>
<span class="t" style="left:1681.5px;top:760.3px;font-size:26.5px;line-height:31px;color:#252423;font-family:'DejaVu Sans Mono','Liberation Mono',monospace;font-weight:700;letter-spacing:-0.58px;-webkit-text-stroke:0.3px #252423;">0.00</span>
<span class="t" style="left:102.3px;top:807.5px;font-size:27px;line-height:31px;color:#252423;font-family:'Liberation Sans',sans-serif;letter-spacing:1.35px;-webkit-text-stroke:0.75px #252423;">Miami Outlet</span>
<span class="t" style="left:475.7px;top:806.8px;font-size:26.5px;line-height:31px;color:#252423;font-family:'DejaVu Sans Mono','Liberation Mono',monospace;letter-spacing:-0.58px;-webkit-text-stroke:0.5px #252423;">317.05</span>
<span class="t" style="left:698.5px;top:806.8px;font-size:26.5px;line-height:31px;color:#252423;font-family:'DejaVu Sans Mono','Liberation Mono',monospace;letter-spacing:-0.58px;-webkit-text-stroke:0.5px #252423;">141.79</span>
<span class="t" style="left:921.3px;top:806.8px;font-size:26.5px;line-height:31px;color:#252423;font-family:'DejaVu Sans Mono','Liberation Mono',monospace;letter-spacing:-0.58px;-webkit-text-stroke:0.5px #252423;">135.74</span>
<span class="t" style="left:1160.2px;top:806.8px;font-size:26.5px;line-height:31px;color:#252423;font-family:'DejaVu Sans Mono','Liberation Mono',monospace;letter-spacing:-0.58px;-webkit-text-stroke:0.5px #252423;">11.61</span>
<span class="t" style="left:1384.3px;top:806.8px;font-size:26.5px;line-height:31px;color:#252423;font-family:'DejaVu Sans Mono','Liberation Mono',monospace;letter-spacing:-0.58px;-webkit-text-stroke:0.5px #252423;">27.92</span>
<span class="t" style="left:1681.3px;top:806.8px;font-size:26.5px;line-height:31px;color:#252423;font-family:'DejaVu Sans Mono','Liberation Mono',monospace;letter-spacing:-0.58px;-webkit-text-stroke:0.5px #252423;">0.34</span>
<span class="t" style="left:115.0px;top:850.6px;font-size:27px;line-height:31px;color:#252423;font-family:'Liberation Sans',sans-serif;letter-spacing:1.25px;">Clothing</span>
<span class="t" style="left:475.7px;top:849.9px;font-size:26.5px;line-height:31px;color:#252423;font-family:'DejaVu Sans Mono','Liberation Mono',monospace;letter-spacing:-0.58px;-webkit-text-stroke:0.15px #252423;">317.05</span>
<span class="t" style="left:698.5px;top:849.9px;font-size:26.5px;line-height:31px;color:#252423;font-family:'DejaVu Sans Mono','Liberation Mono',monospace;letter-spacing:-0.58px;-webkit-text-stroke:0.15px #252423;">141.79</span>
<span class="t" style="left:921.3px;top:849.9px;font-size:26.5px;line-height:31px;color:#252423;font-family:'DejaVu Sans Mono','Liberation Mono',monospace;letter-spacing:-0.58px;-webkit-text-stroke:0.15px #252423;">135.74</span>
<span class="t" style="left:1160.2px;top:849.9px;font-size:26.5px;line-height:31px;color:#252423;font-family:'DejaVu Sans Mono','Liberation Mono',monospace;letter-spacing:-0.58px;-webkit-text-stroke:0.15px #252423;">11.61</span>
<span class="t" style="left:1384.3px;top:849.9px;font-size:26.5px;line-height:31px;color:#252423;font-family:'DejaVu Sans Mono','Liberation Mono',monospace;letter-spacing:-0.58px;-webkit-text-stroke:0.15px #252423;">27.92</span>
<span class="t" style="left:1681.3px;top:849.9px;font-size:26.5px;line-height:31px;color:#252423;font-family:'DejaVu Sans Mono','Liberation Mono',monospace;letter-spacing:-0.58px;-webkit-text-stroke:0.15px #252423;">0.34</span>
<span class="t" style="left:104.0px;top:898.0px;font-size:27px;line-height:31px;color:#252423;font-family:'Liberation Sans',sans-serif;letter-spacing:-0.37px;-webkit-text-stroke:0.75px #252423;">Texas Kiosk</span>
<span class="t" style="left:491.1px;top:897.3px;font-size:26.5px;line-height:31px;color:#252423;font-family:'DejaVu Sans Mono','Liberation Mono',monospace;letter-spacing:-0.58px;-webkit-text-stroke:0.5px #252423;">59.45</span>
<span class="t" style="left:714.2px;top:897.3px;font-size:26.5px;line-height:31px;color:#252423;font-family:'DejaVu Sans Mono','Liberation Mono',monospace;letter-spacing:-0.58px;-webkit-text-stroke:0.5px #252423;">11.62</span>
<span class="t" style="left:937.4px;top:897.3px;font-size:26.5px;line-height:31px;color:#252423;font-family:'DejaVu Sans Mono','Liberation Mono',monospace;letter-spacing:-0.58px;-webkit-text-stroke:0.5px #252423;">14.07</span>
<span class="t" style="left:1160.1px;top:897.3px;font-size:26.5px;line-height:31px;color:#252423;font-family:'DejaVu Sans Mono','Liberation Mono',monospace;letter-spacing:-0.58px;-webkit-text-stroke:0.5px #252423;">11.80</span>
<span class="t" style="left:1383.8px;top:897.3px;font-size:26.5px;line-height:31px;color:#252423;font-family:'DejaVu Sans Mono','Liberation Mono',monospace;letter-spacing:-0.58px;-webkit-text-stroke:0.5px #252423;">21.96</span>
<span class="t" style="left:1679.9px;top:897.3px;font-size:26.5px;line-height:31px;color:#252423;font-family:'DejaVu Sans Mono','Liberation Mono',monospace;letter-spacing:-0.58px;-webkit-text-stroke:0.5px #252423;">#ERR</span>
<span class="t" style="left:115.0px;top:941.6px;font-size:27px;line-height:31px;color:#252423;font-family:'Liberation Sans',sans-serif;letter-spacing:1.25px;">Clothing</span>
<span class="t" style="left:491.1px;top:940.9px;font-size:26.5px;line-height:31px;color:#252423;font-family:'DejaVu Sans Mono','Liberation Mono',monospace;letter-spacing:-0.58px;-webkit-text-stroke:0.15px #252423;">59.45</span>
<span class="t" style="left:714.2px;top:940.9px;font-size:26.5px;line-height:31px;color:#252423;font-family:'DejaVu Sans Mono','Liberation Mono',monospace;letter-spacing:-0.58px;-webkit-text-stroke:0.15px #252423;">11.62</span>
<span class="t" style="left:937.4px;top:940.9px;font-size:26.5px;line-height:31px;color:#252423;font-family:'DejaVu Sans Mono','Liberation Mono',monospace;letter-spacing:-0.58px;-webkit-text-stroke:0.15px #252423;">14.07</span>
<span class="t" style="left:1160.1px;top:940.9px;font-size:26.5px;line-height:31px;color:#252423;font-family:'DejaVu Sans Mono','Liberation Mono',monospace;letter-spacing:-0.58px;-webkit-text-stroke:0.15px #252423;">11.80</span>
<span class="t" style="left:1383.8px;top:940.9px;font-size:26.5px;line-height:31px;color:#252423;font-family:'DejaVu Sans Mono','Liberation Mono',monospace;letter-spacing:-0.58px;-webkit-text-stroke:0.15px #252423;">21.96</span>
<span class="t" style="left:1679.9px;top:940.9px;font-size:26.5px;line-height:31px;color:#252423;font-family:'DejaVu Sans Mono','Liberation Mono',monospace;letter-spacing:-0.58px;-webkit-text-stroke:0.15px #252423;">#ERR</span>
<span class="t" style="left:82.3px;top:988.0px;font-size:27px;line-height:31px;color:#252423;font-family:'Liberation Sans',sans-serif;font-weight:700;letter-spacing:-1.40px;">West</span>
<span class="t" style="left:475.3px;top:987.3px;font-size:26.5px;line-height:31px;color:#252423;font-family:'DejaVu Sans Mono','Liberation Mono',monospace;font-weight:700;letter-spacing:-0.58px;-webkit-text-stroke:0.3px #252423;">706.08</span>
<span class="t" style="left:698.9px;top:987.3px;font-size:26.5px;line-height:31px;color:#252423;font-family:'DejaVu Sans Mono','Liberation Mono',monospace;font-weight:700;letter-spacing:-0.58px;-webkit-text-stroke:0.3px #252423;">296.02</span>
<span class="t" style="left:921.5px;top:987.3px;font-size:26.5px;line-height:31px;color:#252423;font-family:'DejaVu Sans Mono','Liberation Mono',monospace;font-weight:700;letter-spacing:-0.58px;-webkit-text-stroke:0.3px #252423;">350.36</span>
<span class="t" style="left:1159.6px;top:987.3px;font-size:26.5px;line-height:31px;color:#252423;font-family:'DejaVu Sans Mono','Liberation Mono',monospace;font-weight:700;letter-spacing:-0.58px;-webkit-text-stroke:0.3px #252423;">23.14</span>
<span class="t" style="left:1383.9px;top:987.3px;font-size:26.5px;line-height:31px;color:#252423;font-family:'DejaVu Sans Mono','Liberation Mono',monospace;font-weight:700;letter-spacing:-0.58px;-webkit-text-stroke:0.3px #252423;">36.55</span>
<span class="t" style="left:1681.5px;top:987.3px;font-size:26.5px;line-height:31px;color:#252423;font-family:'DejaVu Sans Mono','Liberation Mono',monospace;font-weight:700;letter-spacing:-0.58px;-webkit-text-stroke:0.3px #252423;">0.20</span>
<span class="t" style="left:103.3px;top:1034.8px;font-size:27px;line-height:31px;color:#252423;font-family:'Liberation Sans',sans-serif;letter-spacing:0.39px;-webkit-text-stroke:0.75px #252423;">Seattle Store</span>
<span class="t" style="left:475.3px;top:1034.1px;font-size:26.5px;line-height:31px;color:#252423;font-family:'DejaVu Sans Mono','Liberation Mono',monospace;letter-spacing:-0.58px;-webkit-text-stroke:0.5px #252423;">706.08</span>
<span class="t" style="left:698.9px;top:1034.1px;font-size:26.5px;line-height:31px;color:#252423;font-family:'DejaVu Sans Mono','Liberation Mono',monospace;letter-spacing:-0.58px;-webkit-text-stroke:0.5px #252423;">296.02</span>
<span class="t" style="left:921.7px;top:1034.1px;font-size:26.5px;line-height:31px;color:#252423;font-family:'DejaVu Sans Mono','Liberation Mono',monospace;letter-spacing:-0.58px;-webkit-text-stroke:0.5px #252423;">350.36</span>
<span class="t" style="left:1159.7px;top:1034.1px;font-size:26.5px;line-height:31px;color:#252423;font-family:'DejaVu Sans Mono','Liberation Mono',monospace;letter-spacing:-0.58px;-webkit-text-stroke:0.5px #252423;">23.14</span>
<span class="t" style="left:1384.2px;top:1034.1px;font-size:26.5px;line-height:31px;color:#252423;font-family:'DejaVu Sans Mono','Liberation Mono',monospace;letter-spacing:-0.58px;-webkit-text-stroke:0.5px #252423;">36.55</span>
<span class="t" style="left:1681.7px;top:1034.1px;font-size:26.5px;line-height:31px;color:#252423;font-family:'DejaVu Sans Mono','Liberation Mono',monospace;letter-spacing:-0.58px;-webkit-text-stroke:0.5px #252423;">0.20</span>
<span class="t" style="left:114.1px;top:1078.2px;font-size:27px;line-height:31px;color:#252423;font-family:'Liberation Sans',sans-serif;letter-spacing:0.65px;">Electronics</span>
<span class="t" style="left:475.3px;top:1077.5px;font-size:26.5px;line-height:31px;color:#252423;font-family:'DejaVu Sans Mono','Liberation Mono',monospace;letter-spacing:-0.58px;-webkit-text-stroke:0.15px #252423;">706.08</span>
<span class="t" style="left:698.9px;top:1077.5px;font-size:26.5px;line-height:31px;color:#252423;font-family:'DejaVu Sans Mono','Liberation Mono',monospace;letter-spacing:-0.58px;-webkit-text-stroke:0.15px #252423;">296.02</span>
<span class="t" style="left:921.7px;top:1077.5px;font-size:26.5px;line-height:31px;color:#252423;font-family:'DejaVu Sans Mono','Liberation Mono',monospace;letter-spacing:-0.58px;-webkit-text-stroke:0.15px #252423;">350.36</span>
<span class="t" style="left:1159.7px;top:1077.5px;font-size:26.5px;line-height:31px;color:#252423;font-family:'DejaVu Sans Mono','Liberation Mono',monospace;letter-spacing:-0.58px;-webkit-text-stroke:0.15px #252423;">23.14</span>
<span class="t" style="left:1384.2px;top:1077.5px;font-size:26.5px;line-height:31px;color:#252423;font-family:'DejaVu Sans Mono','Liberation Mono',monospace;letter-spacing:-0.58px;-webkit-text-stroke:0.15px #252423;">36.55</span>
<span class="t" style="left:1681.7px;top:1077.5px;font-size:26.5px;line-height:31px;color:#252423;font-family:'DejaVu Sans Mono','Liberation Mono',monospace;letter-spacing:-0.58px;-webkit-text-stroke:0.15px #252423;">0.20</span>
<svg class="r" style="left:0px;top:0px;" width="2808" height="1551" viewBox="0 0 2808 1551" fill="none"><rect x="50.6" y="538.5" width="16.2" height="15.4" stroke="#3a3a3a" stroke-width="1.7"/><path d="M54.2 546.2 L63.2 546.2" stroke="#3a3a3a" stroke-width="1.7"/><rect x="72.9" y="584.5" width="16.2" height="15.4" stroke="#3a3a3a" stroke-width="1.7"/><path d="M76.5 592.2 L85.5 592.2" stroke="#3a3a3a" stroke-width="1.7"/><rect x="72.9" y="674.1" width="16.2" height="15.4" stroke="#3a3a3a" stroke-width="1.7"/><path d="M76.5 681.8 L85.5 681.8" stroke="#3a3a3a" stroke-width="1.7"/><rect x="50.6" y="764.7" width="16.2" height="15.4" stroke="#3a3a3a" stroke-width="1.7"/><path d="M54.2 772.4 L63.2 772.4" stroke="#3a3a3a" stroke-width="1.7"/><rect x="72.9" y="811.2" width="16.2" height="15.4" stroke="#3a3a3a" stroke-width="1.7"/><path d="M76.5 818.9 L85.5 818.9" stroke="#3a3a3a" stroke-width="1.7"/><rect x="72.9" y="901.7" width="16.2" height="15.4" stroke="#3a3a3a" stroke-width="1.7"/><path d="M76.5 909.4 L85.5 909.4" stroke="#3a3a3a" stroke-width="1.7"/><rect x="50.6" y="991.7" width="16.2" height="15.4" stroke="#3a3a3a" stroke-width="1.7"/><path d="M54.2 999.4 L63.2 999.4" stroke="#3a3a3a" stroke-width="1.7"/><rect x="72.9" y="1038.5" width="16.2" height="15.4" stroke="#3a3a3a" stroke-width="1.7"/><path d="M76.5 1046.2 L85.5 1046.2" stroke="#3a3a3a" stroke-width="1.7"/></svg>
</div>

<!-- status -->
<div class="sec" id="status">
<div class="r" style="left:2px;top:1488.4px;width:2155px;height:2px;background:#d4d4d4;"></div>
<span class="t" style="left:1.3px;top:1504.6px;font-size:26px;line-height:30px;color:#252423;font-family:'Liberation Sans',sans-serif;letter-spacing:-0.60px;">Rows: 13</span>
<div class="r" style="left:1653px;top:1501.9px;width:120.6px;height:42.8px;background:#fff;border:2px solid #b4b4b4;"></div>
<span class="t" style="left:1678.4px;top:1510.2px;font-size:25.5px;line-height:30px;color:#252423;font-family:'DejaVu Sans Mono','Liberation Mono',monospace;letter-spacing:-0.80px;">100</span>
<span class="t" style="left:1728.7px;top:1512.5px;font-size:22px;line-height:25px;color:#252423;font-family:'Liberation Sans',sans-serif;">%</span>
<span class="t" style="left:1914.4px;top:1504.6px;font-size:26px;line-height:30px;color:#252423;font-family:'Liberation Sans',sans-serif;letter-spacing:-0.02px;">Page 1 of 1</span>
<svg class="r" style="left:0px;top:0px;" width="2808" height="1551" viewBox="0 0 2808 1551" fill="none"><path d="M1567.3 1508.3 L1567.5 1503.2 L1573.1 1503.2 L1573.3 1508.3 L1576.7 1509.7 L1580.4 1506.2 L1584.4 1510.2 L1580.9 1513.9 L1582.3 1517.3 L1587.4 1517.5 L1587.4 1523.1 L1582.3 1523.3 L1580.9 1526.7 L1584.4 1530.4 L1580.4 1534.4 L1576.7 1530.9 L1573.3 1532.3 L1573.1 1537.4 L1567.5 1537.4 L1567.3 1532.3 L1563.9 1530.9 L1560.2 1534.4 L1556.2 1530.4 L1559.7 1526.7 L1558.3 1523.3 L1553.2 1523.1 L1553.2 1517.5 L1558.3 1517.3 L1559.7 1513.9 L1556.2 1510.2 L1560.2 1506.2 L1563.9 1509.7 Z" stroke="#3a3a3a" stroke-width="2" stroke-linejoin="round"/><circle cx="1570.3" cy="1520.3" r="6.3" stroke="#1553b0" stroke-width="2.2"/><path d="M1612.7 1522 L1634.5 1522" stroke="#252423" stroke-width="2.2"/><path d="M1786.6 1522.8 L1810.6 1522.8 M1798.6 1511 L1798.6 1534.6" stroke="#252423" stroke-width="2.2"/><path d="M1855.2 1508 L1855.2 1530" stroke="#9a9a9a" stroke-width="3.4"/><path d="M1874.6 1508.6 L1863.6 1519 L1874.6 1529.4" stroke="#9a9a9a" stroke-width="3.2"/><path d="M1901.8 1508.6 L1890.8 1519 L1901.8 1529.4" stroke="#9a9a9a" stroke-width="3.2"/><path d="M2061.2 1508.6 L2072.2 1519 L2061.2 1529.4" stroke="#9a9a9a" stroke-width="3.2"/><path d="M2087.6 1508.6 L2098.6 1519 L2087.6 1529.4" stroke="#9a9a9a" stroke-width="3.2"/><path d="M2107.2 1508 L2107.2 1530" stroke="#9a9a9a" stroke-width="3.4"/></svg>
</div>

<!-- panel -->
<div class="sec" id="panel">
<div class="r" style="left:2157px;top:0px;width:651px;height:1551px;background:#f4f4f4;box-shadow:-2px 0 8px rgba(0,0,0,0.13);"></div>
<div class="r" style="left:2157px;top:0px;width:651px;height:125.7px;background:#fff;"></div>
<div class="r" style="left:2157px;top:1406px;width:651px;height:145px;background:#fff;"></div>
<span class="t" style="left:2259.1px;top:49.1px;font-size:44px;line-height:49px;color:#323130;font-family:'Liberation Sans',sans-serif;letter-spacing:-0.89px;">Formula Measure</span>
<span class="t" style="left:2192.9px;top:167.2px;font-size:27px;line-height:31px;color:#252423;font-family:'Liberation Sans',sans-serif;letter-spacing:0.66px;-webkit-text-stroke:0.55px #252423;">Title</span>
<span class="t" style="left:2253.5px;top:165.0px;font-size:28px;line-height:31px;color:#a80000;font-family:'Liberation Sans',sans-serif;font-weight:700;">*</span>
<div class="r" style="left:2192.9px;top:214px;width:578.1px;height:74.7px;background:#fff;border:3.8px solid #dfdfdf;"></div>
<span class="t" style="left:2205.4px;top:240.4px;font-size:25px;line-height:28px;color:#323130;font-family:'Liberation Sans',sans-serif;letter-spacing:-1.09px;">PERCENTRANKEXC</span>
<span class="t" style="left:2192.2px;top:321.0px;font-size:27px;line-height:31px;color:#252423;font-family:'Liberation Sans',sans-serif;letter-spacing:-0.80px;-webkit-text-stroke:0.55px #252423;">Insert as</span>
<span class="t" style="left:2297.8px;top:318.8px;font-size:28px;line-height:31px;color:#a80000;font-family:'Liberation Sans',sans-serif;font-weight:700;">*</span>
<div class="r" style="left:2192.9px;top:368.7px;width:216.1px;height:185px;background:#fff;"></div>
<div class="r" style="left:2426.8px;top:368.7px;width:210.8px;height:185px;background:#fff;border:2.6px solid #0078d4;"></div>
<span class="t" style="left:2268.8px;top:460.8px;font-size:27px;line-height:31px;color:#393837;font-family:'Liberation Sans',sans-serif;letter-spacing:-0.95px;">Visual</span>
<span class="t" style="left:2251.7px;top:499.6px;font-size:27px;line-height:31px;color:#393837;font-family:'Liberation Sans',sans-serif;letter-spacing:-0.90px;">Measure</span>
<span class="t" style="left:2500.7px;top:460.8px;font-size:27px;line-height:31px;color:#393837;font-family:'Liberation Sans',sans-serif;letter-spacing:-0.95px;">Visual</span>
<span class="t" style="left:2487.2px;top:499.6px;font-size:27px;line-height:31px;color:#393837;font-family:'Liberation Sans',sans-serif;letter-spacing:-0.13px;">Column</span>
<span class="t" style="left:2192.4px;top:586.0px;font-size:27px;line-height:31px;color:#252423;font-family:'Liberation Sans',sans-serif;letter-spacing:-0.66px;-webkit-text-stroke:0.55px #252423;">Formula</span>
<span class="t" style="left:2289.3px;top:583.8px;font-size:28px;line-height:31px;color:#a80000;font-family:'Liberation Sans',sans-serif;font-weight:700;">*</span>
<div class="r" style="left:2192.9px;top:637.2px;width:578.1px;height:278.6px;background:#f5f5f5;border:2px solid #dadada;"></div>
<div class="r" style="left:2194.9px;top:639.2px;width:574.1px;height:221px;background:#fff;"></div>
<div class="r" style="left:2194.9px;top:860.2px;width:574.1px;height:2px;background:#dadada;"></div>
<span class="t" style="left:2203.2px;top:657.6px;font-size:24.5px;line-height:27px;color:#0f78d4;font-family:'Liberation Sans',sans-serif;letter-spacing:-0.74px;">PERCENTRANKEXC</span>
<span class="t" style="left:2428.9px;top:655.6px;font-size:26px;line-height:30px;color:#252423;font-family:'Liberation Sans',sans-serif;">(</span>
<span class="t" style="left:2439.2px;top:657.6px;font-size:24.5px;line-height:27px;color:#0f78d4;font-family:'Liberation Sans',sans-serif;letter-spacing:-1.66px;">SELECT</span>
<span class="t" style="left:2526.4px;top:655.6px;font-size:26px;line-height:30px;color:#252423;font-family:'Liberation Sans',sans-serif;">(</span>
<span class="t" style="left:2536.9px;top:655.6px;font-size:26px;line-height:30px;color:#0f78d4;font-family:'Liberation Sans',sans-serif;letter-spacing:-0.18px;">[Revenue]</span>
<span class="t" style="left:2655.7px;top:655.6px;font-size:26px;line-height:30px;color:#252423;font-family:'Liberation Sans',sans-serif;">,</span>
<span class="t" style="left:2667.1px;top:655.6px;font-size:26px;line-height:30px;color:#2e9a52;font-family:'Liberation Sans',sans-serif;">1</span>
<span class="t" style="left:2684.7px;top:655.6px;font-size:26px;line-height:30px;color:#252423;font-family:'Liberation Sans',sans-serif;">,</span>
<span class="t" style="left:2696.2px;top:655.6px;font-size:26px;line-height:30px;color:#2e9a52;font-family:'Liberation Sans',sans-serif;">4</span>
<span class="t" style="left:2713.4px;top:655.6px;font-size:26px;line-height:30px;color:#252423;font-family:'Liberation Sans',sans-serif;">),</span>
<span class="t" style="left:2727.5px;top:655.6px;font-size:26px;line-height:30px;color:#0f78d4;font-family:'Liberation Sans',sans-serif;">X</span>
<span class="t" style="left:2205.7px;top:700.0px;font-size:26px;line-height:30px;color:#0f78d4;font-family:'Liberation Sans',sans-serif;letter-spacing:0.74px;">_West__Seattle__Store__Electronics</span>
<span class="t" style="left:2659.7px;top:700.0px;font-size:26px;line-height:30px;color:#252423;font-family:'Liberation Sans',sans-serif;">.</span>
<span class="t" style="left:2670.4px;top:700.0px;font-size:26px;line-height:30px;color:#0f78d4;font-family:'Liberation Sans',sans-serif;letter-spacing:0.05px;">[2024 &gt;</span>
<span class="t" style="left:2203.1px;top:743.6px;font-size:26px;line-height:30px;color:#0f78d4;font-family:'Liberation Sans',sans-serif;letter-spacing:-0.45px;">Revenue]</span>
<span class="t" style="left:2313.2px;top:743.6px;font-size:26px;line-height:30px;color:#252423;font-family:'Liberation Sans',sans-serif;">,</span>
<span class="t" style="left:2324.2px;top:743.6px;font-size:26px;line-height:30px;color:#2e9a52;font-family:'Liberation Sans',sans-serif;">2</span>
<span class="t" style="left:2340.9px;top:743.6px;font-size:26px;line-height:30px;color:#252423;font-family:'Liberation Sans',sans-serif;">)</span>
<span class="t" style="left:2214.2px;top:865.6px;font-size:34px;line-height:37px;color:#1a4fa8;font-family:'Liberation Serif',serif;font-style:italic;-webkit-text-stroke:0.5px #1a4fa8;">f</span>
<span class="t" style="left:2233.0px;top:867.8px;font-size:31px;line-height:35px;color:#333;font-family:'Liberation Serif',serif;font-weight:700;font-style:italic;">x</span>
<span class="t" style="left:2227.1px;top:921.3px;font-size:23px;line-height:26px;color:#605e5c;font-family:'Liberation Sans',sans-serif;font-weight:700;letter-spacing:-0.32px;">Example</span>
<span class="t" style="left:2320.3px;top:920.3px;font-size:24px;line-height:27px;color:#605e5c;font-family:'Liberation Sans',sans-serif;">:</span>
<span class="t" style="left:2340.1px;top:920.3px;font-size:24px;line-height:27px;color:#605e5c;font-family:'Liberation Sans',sans-serif;font-style:italic;letter-spacing:-0.16px;">[Revenue] + [fxRANK]</span>
<span class="t" style="left:2226.8px;top:956.6px;font-size:24px;line-height:27px;color:#605e5c;font-family:'Liberation Sans',sans-serif;letter-spacing:-1.00px;">Use</span>
<span class="t" style="left:2272.6px;top:958.6px;font-size:22.5px;line-height:25px;color:#605e5c;font-family:'Liberation Sans',sans-serif;font-weight:700;letter-spacing:-0.42px;">Ctrl + Space</span>
<span class="t" style="left:2404.6px;top:956.6px;font-size:24px;line-height:27px;color:#605e5c;font-family:'Liberation Sans',sans-serif;letter-spacing:-0.30px;">to open suggestion, also select any</span>
<span class="t" style="left:2227.6px;top:992.6px;font-size:24px;line-height:27px;color:#605e5c;font-family:'Liberation Sans',sans-serif;letter-spacing:0.09px;">column or cell to insert the reference</span>
<span class="t" style="left:2192.4px;top:1065.8px;font-size:27px;line-height:31px;color:#252423;font-family:'Liberation Sans',sans-serif;letter-spacing:-0.53px;-webkit-text-stroke:0.55px #252423;">Row aggregation type</span>
<span class="t" style="left:2453.8px;top:1063.5px;font-size:28px;line-height:31px;color:#a80000;font-family:'Liberation Sans',sans-serif;font-weight:700;">*</span>
<div class="r" style="left:2193px;top:1113.3px;width:577.6px;height:69.4px;background:#fff;border:2px solid #dadada;"></div>
<span class="t" style="left:2216.8px;top:1134.0px;font-size:27px;line-height:31px;color:#323130;font-family:'Liberation Sans',sans-serif;letter-spacing:-0.73px;">Formula</span>
<span class="t" style="left:2237.3px;top:1216.0px;font-size:26px;line-height:30px;color:#252423;font-family:'Liberation Sans',sans-serif;letter-spacing:0.30px;-webkit-text-stroke:0.5px #252423;">Description</span>
<div class="r" style="left:2400px;top:1437px;width:176.6px;height:80px;background:#f3f3f3;"></div>
<span class="t" style="left:2445.3px;top:1462.4px;font-size:28px;line-height:31px;color:#252423;font-family:'Liberation Sans',sans-serif;letter-spacing:0.06px;-webkit-text-stroke:0.55px #252423;">Cancel</span>
<div class="r" style="left:2599px;top:1437.2px;width:176.8px;height:79.8px;background:#0078d4;"></div>
<span class="t" style="left:2640.4px;top:1462.6px;font-size:28px;line-height:31px;color:#f6f6f6;font-family:'Liberation Sans',sans-serif;letter-spacing:0.53px;-webkit-text-stroke:1.0px #f6f6f6;">Update</span>
<svg class="r" style="left:0px;top:0px;" width="2808" height="1551" viewBox="0 0 2808 1551" fill="none"><path d="M2667 9.2 L2690.5 9.2 M2671.2 17.2 L2686.4 17.2 M2675.2 25 L2682.6 25" stroke="#6a6a6a" stroke-width="2"/><path d="M2732 9 L2727 9 Q2723.4 9 2723.4 12.6 L2723.4 25.8 Q2723.4 29.4 2727 29.4 L2742 29.4 Q2745.6 29.4 2745.6 25.8 L2745.6 21" stroke="#6a6a6a" stroke-width="1.8"/><path d="M2723.4 19.5 L2731.5 19.5 Q2734.6 19.5 2734.6 22.5 L2734.6 29.4" stroke="#6a6a6a" stroke-width="1.8"/><path d="M2734.5 19.5 L2745.6 8.8 M2737.5 8.6 L2745.8 8.6 L2745.8 16.8" stroke="#6a6a6a" stroke-width="1.8"/><circle cx="2782.4" cy="17.4" r="2.4" fill="#767676"/><circle cx="2790.4" cy="17.4" r="2.4" fill="#767676"/><circle cx="2798.4" cy="17.4" r="2.4" fill="#767676"/><path d="M2212 62 L2199.4 74.7 L2212 87.4" stroke="#323130" stroke-width="2"/><circle cx="2615.2" cy="67.7" r="11.7" stroke="#323130" stroke-width="1.7"/><path d="M2615.2 64.5 L2615.2 74" stroke="#323130" stroke-width="1.9"/><circle cx="2615.2" cy="61" r="1.2" fill="#323130"/><path d="M2759.4 69.8 L2783.6 93.4 M2783.6 69.8 L2759.4 93.4" stroke="#323130" stroke-width="2.8"/><circle cx="2229" cy="409.5" r="13.2" fill="#fff" stroke="#686868" stroke-width="2.2"/><circle cx="2463" cy="409.5" r="13.2" fill="#fff" stroke="#0078d4" stroke-width="2.2"/><circle cx="2463" cy="409.5" r="8.3" fill="#0078d4"/><rect x="2280.6" y="422.4" width="9.8" height="25.8" fill="#7ab3ea" stroke="#1553b0" stroke-width="2"/><rect x="2307.8" y="422.4" width="9.3" height="25.8" fill="#7ab3ea" stroke="#1553b0" stroke-width="2"/><rect x="2332.6" y="422.4" width="9.8" height="25.8" fill="#7ab3ea" stroke="#1553b0" stroke-width="2"/><path d="M2261.5 414 L2342.4 414 L2342.4 448.2 L2261.5 448.2 Z M2261.5 422.4 L2342.4 422.4 M2290.4 414 L2290.4 422.4 M2317.1 414 L2317.1 422.4 M2270.7 422.4 L2270.7 448.2 M2298.8 422.4 L2298.8 448.2 M2324.1 422.4 L2324.1 448.2 " stroke="#444" stroke-width="2"/><rect x="2280.6" y="422.4" width="9.8" height="25.8" stroke="#1553b0" stroke-width="2"/><rect x="2307.8" y="422.4" width="9.3" height="25.8" stroke="#1553b0" stroke-width="2"/><rect x="2332.6" y="422.4" width="9.8" height="25.8" stroke="#1553b0" stroke-width="2"/><path d="M2284.8 409.5 L2284.8 395.8 L2336.8 395.8 L2336.8 409.5 M2309.2 395.8 L2309.2 409.5 M2280.8 405.6 L2284.8 410 L2288.8 405.6 M2305.2 405.6 L2309.2 410 L2313.2 405.6 M2332.8 405.6 L2336.8 410 L2340.8 405.6 " stroke="#1553b0" stroke-width="2"/><path d="M2494.8 413.7 L2561.7 413.7 M2561.7 447.4 L2494.8 447.4 L2494.8 413.7 M2494.8 422 L2561.7 422 M2518.1 413.7 L2518.1 447.4 M2540.6 413.7 L2540.6 447.4 M2506.9 422 L2506.9 447.4 M2529.4 422 L2529.4 447.4 M2551.9 422 L2551.9 447.4 " stroke="#444" stroke-width="2"/><rect x="2561.7" y="413.7" width="12.1" height="33.7" fill="#7ab3ea" stroke="#1553b0" stroke-width="2"/><path d="M2567.9 397 L2567.9 409 M2563.9 405.2 L2567.9 409.6 L2571.9 405.2" stroke="#1553b0" stroke-width="2"/><path d="M2730 611.2 L2752.6 589 M2743 588.8 L2752.8 588.8 L2752.8 598.6 M2729.8 601.6 L2729.8 611.4 L2739.6 611.4" stroke="#323130" stroke-width="1.8"/><path d="M2727 900 L2719.6 900 L2719.6 877.5 L2742 877.5 L2742 886" stroke="#9a9a9a" stroke-width="1.8"/><path d="M2725.5 880.5 L2725.5 876 L2728 876 Q2728.5 872.8 2730.8 872.8 Q2733.2 872.8 2733.6 876 L2736.2 876 L2736.2 880.5 Z" stroke="#9a9a9a" stroke-width="1.6" stroke-linejoin="round"/><path d="M2731.5 889.5 L2727.2 894 L2731.5 898.5 M2743.5 889.5 L2747.8 894 L2743.5 898.5 M2739.6 887.5 L2735.4 900.5" stroke="#6f94d4" stroke-width="1.7"/><path d="M2201 939 Q2196.6 934.5 2196.6 930.8 Q2196.6 921.8 2205.5 921.8 Q2214.4 921.8 2214.4 930.8 Q2214.4 934.5 2210 939 L2210 945 L2201 945 Z M2201 940.5 L2210 940.5" stroke="#605e5c" stroke-width="1.7" stroke-linejoin="round"/><path d="M2722 1140.6 L2734.2 1153 L2746.4 1140.6" stroke="#323130" stroke-width="2"/><path d="M2200.6 1218.4 L2213.4 1230.3 L2200.6 1242.2" stroke="#323130" stroke-width="1.9"/></svg>
</div>
</body></html>
